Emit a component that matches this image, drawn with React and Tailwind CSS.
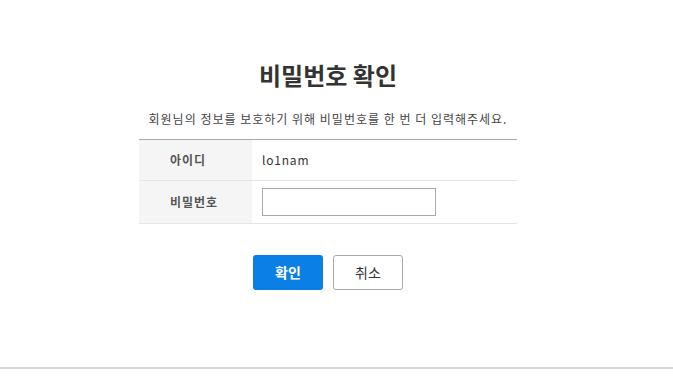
export default function App() {
  const font = { fontFamily: '"Noto Sans CJK KR", "Noto Sans", sans-serif' };
  return (
    <div className="w-[673px] h-[376px] bg-white flex flex-col overflow-hidden" style={font}>
      <div className="w-[656px] flex flex-col items-center pt-[60px] h-[307px]">
        <h2 className="text-[24px] leading-[30px] font-bold text-[#333]">비밀번호 확인</h2>
        <p className="mt-[20px] text-[12px] leading-[18px] text-[#444] tracking-[1px]">
          회원님의 정보를 보호하기 위해 비밀번호를 한 번 더 입력해주세요.
        </p>
        <div className="mt-[11px] w-[378px] border-t border-[#aaa]">
          <div className="flex h-[41px] border-b border-[#e5e5e5]">
            <div className="w-[113px] bg-[#f5f5f5] flex items-center pl-[31px] text-[12px] font-bold text-[#555] tracking-[1px]">아이디</div>
            <div className="flex-1 flex items-center pl-[10px] text-[12px] text-[#333] tracking-[0.8px]">lo1nam</div>
          </div>
          <div className="flex h-[43px] border-b border-[#e5e5e5]">
            <div className="w-[113px] bg-[#f5f5f5] flex items-center pl-[31px] text-[12px] font-bold text-[#555] tracking-[1px]">비밀번호</div>
            <div className="flex-1 flex items-center pl-[10px]">
              <input type="password" className="w-[174px] h-[28px] border border-[#aaa] bg-white outline-none" />
            </div>
          </div>
        </div>
        <div className="mt-[31px] flex gap-[10px]">
          <button className="w-[70px] h-[35px] rounded-[3px] bg-[#0a7fe6] text-white text-[14px] font-bold">확인</button>
          <button className="w-[70px] h-[35px] rounded-[3px] border border-[#aaa] bg-white text-[#333] text-[14px]">취소</button>
        </div>
      </div>
      <div className="flex-1 border-t-2 border-[#d6d6d6] mt-[60px]"></div>
    </div>
  );
}
